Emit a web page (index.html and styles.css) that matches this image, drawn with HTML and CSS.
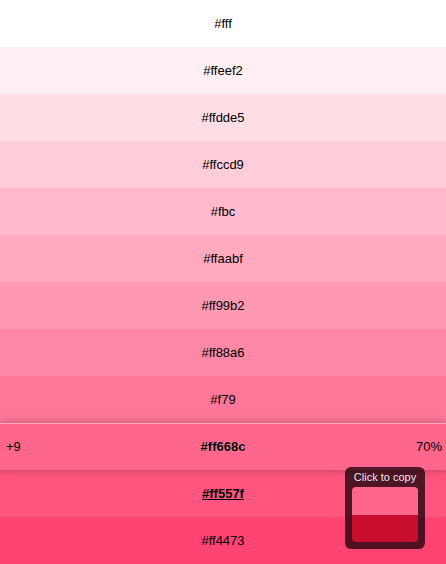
FILE: index.html
```html
<!DOCTYPE html>
<html>
<head>
<meta charset="utf-8">
<link rel="stylesheet" href="styles.css">
</head>
<body>
<ul class="scale">
  <li class="row c0"><span class="hex">#fff</span></li>
  <li class="row c1"><span class="hex">#ffeef2</span></li>
  <li class="row c2"><span class="hex">#ffdde5</span></li>
  <li class="row c3"><span class="hex">#ffccd9</span></li>
  <li class="row c4"><span class="hex">#fbc</span></li>
  <li class="row c5"><span class="hex">#ffaabf</span></li>
  <li class="row c6"><span class="hex">#ff99b2</span></li>
  <li class="row c7"><span class="hex">#ff88a6</span></li>
  <li class="row c8"><span class="hex">#f79</span></li>
  <li class="row c9 active"><span class="step">+9</span><span class="hex">#ff668c</span><span class="pct">70%</span></li>
  <li class="row c10 hover"><span class="hex">#ff557f</span>
    <div class="tip">
      <div class="tip-title">Click to copy</div>
      <div class="tip-swatch"><div class="sw-top"></div><div class="sw-bottom"></div></div>
    </div>
  </li>
  <li class="row c11"><span class="hex">#ff4473</span></li>
</ul>
</body>
</html>
```

FILE: styles.css
```css
html, body {
  margin: 0;
  padding: 0;
  background: #fff;
}
body {
  font-family: "Liberation Sans", Arial, sans-serif;
  font-size: 13px;
  color: #000;
  overflow: hidden;
}
.scale {
  list-style: none;
  margin: 0;
  padding: 0;
}
.row {
  height: 47px;
  display: grid;
  grid-template-columns: 1fr auto 1fr;
  align-items: center;
  position: relative;
}
.hex {
  grid-column: 2;
  text-align: center;
}
.step {
  grid-column: 1;
  justify-self: start;
  padding-left: 6px;
}
.pct {
  grid-column: 3;
  justify-self: end;
  padding-right: 4px;
}
.c0 { background: #fff; }
.c1 { background: #ffeef2; }
.c2 { background: #ffdde5; }
.c3 { background: #ffccd9; }
.c4 { background: #ffbbcc; }
.c5 { background: #ffaabf; }
.c6 { background: #ff99b2; }
.c7 { background: #ff88a6; }
.c8 { background: #ff7799; }
.c9 { background: #ff668c; }
.c10 { background: #ff557f; }
.c11 { background: #ff4473; }

.active {
  z-index: 2;
  box-shadow: 0 0 9px rgba(0, 0, 0, 0.28), inset 0 1px 0 rgba(255, 255, 255, 0.45);
}
.active .hex {
  font-weight: bold;
  text-shadow: 0 0 1px rgba(255, 255, 255, 0.5);
}
.hover .hex {
  font-weight: bold;
  text-decoration: underline;
}
.tip {
  position: absolute;
  left: 345px;
  top: -3px;
  width: 80px;
  height: 82px;
  box-sizing: border-box;
  padding: 3px 7px 7px;
  background: rgba(20, 0, 6, 0.75);
  border-radius: 6px;
  z-index: 3;
  display: flex;
  flex-direction: column;
}
.tip-title {
  font-size: 11px;
  color: #e8e8f0;
  text-align: center;
  line-height: 14px;
  margin-bottom: 3px;
  white-space: nowrap;
}
.tip-swatch {
  flex: 1;
  border-radius: 4px;
  overflow: hidden;
  display: flex;
  flex-direction: column;
}
.sw-top {
  flex: 1;
  background: #ff668c;
}
.sw-bottom {
  flex: 1;
  background: #c80d2f;
}
```
